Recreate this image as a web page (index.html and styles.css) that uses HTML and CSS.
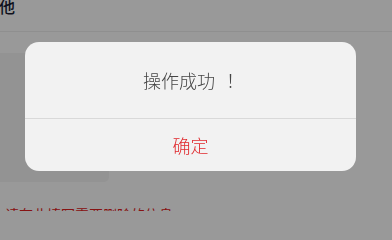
FILE: index.html
```html
<!DOCTYPE html>
<html lang="zh">
<head>
<meta charset="utf-8">
<link rel="stylesheet" href="styles.css">
</head>
<body>
<div class="page">
  <div class="header"><span class="header-title">他</span></div>
  <div class="card"></div>
  <div class="note">请在此填写需要删除的信息</div>
</div>
<div class="overlay">
  <div class="dialog">
    <div class="dialog-body">操作成功<span class="bang">！</span></div>
    <div class="dialog-btn">确定</div>
  </div>
</div>
</body>
</html>
```
FILE: styles.css
```css
html, body {
  margin: 0;
  padding: 0;
  width: 392px;
  height: 211px;
  overflow: hidden;
}
body {
  background: #fff;
  font-family: "Noto Sans CJK SC", "Noto Sans", sans-serif;
}
.page {
  height: 211px;
  overflow: hidden;
  display: flex;
  flex-direction: column;
}
.header {
  flex: none;
  height: 32px;
  border-bottom: 1px solid #eeeeee;
  box-sizing: border-box;
  overflow: hidden;
}
.header-title {
  display: block;
  font-size: 16px;
  line-height: 16px;
  margin-top: -2px;
  margin-left: -1px;
  font-weight: 500;
  color: #1a1d33;
}
.card {
  flex: none;
  margin-top: 21px;
  width: 109px;
  height: 129px;
  background: #f5f5f5;
  border-radius: 0 0 5px 0;
}
.note {
  flex: none;
  margin-top: 22px;
  padding-left: 5px;
  font-size: 14px;
  line-height: 20px;
  color: #e02020;
  white-space: nowrap;
}
.overlay {
  position: fixed;
  inset: 0;
  background: rgba(0, 0, 0, 0.4);
}
.dialog {
  position: absolute;
  left: 25px;
  top: 42px;
  width: 331px;
  height: 129px;
  background: #f2f2f2;
  border-radius: 14px;
  display: flex;
  flex-direction: column;
  overflow: hidden;
}
.dialog-body {
  height: 76px;
  padding-right: 5px;
  display: flex;
  align-items: center;
  justify-content: center;
  font-size: 18px;
  font-weight: 300;
  color: #454545;
  border-bottom: 1px solid #d9d9d9;
}
.bang {
  display: inline-block;
  width: 18px;
  box-sizing: border-box;
  padding-left: 11px;
  overflow: visible;
}
.dialog-btn {
  flex: 1;
  display: flex;
  align-items: center;
  justify-content: center;
  font-size: 18px;
  font-weight: 300;
  color: #e0282c;
}
```
